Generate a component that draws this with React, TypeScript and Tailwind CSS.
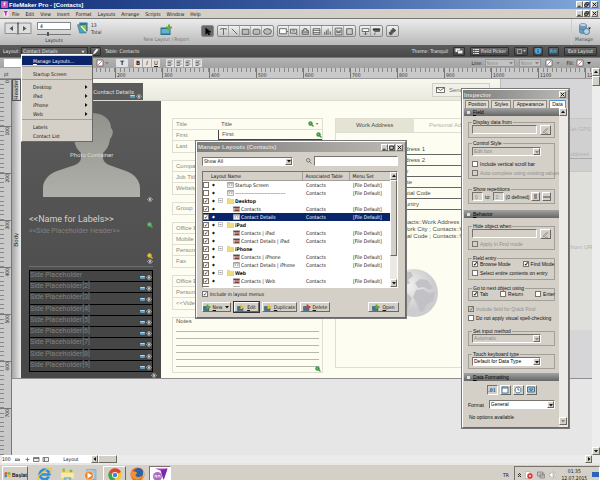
import type { ReactNode } from 'react'
import clsx from 'clsx'

const menus = ['File', 'Edit', 'View', 'Insert', 'Format', 'Layouts', 'Arrange', 'Scripts', 'Window', 'Help']
const rulerMarks = ['', '100', '200', '300', '400', '500', '600', '700', '800', '900', '1000', '1100', '1200']
const sideRows = ['', '[2]', '[3]', '[4]', '[5]', '[6]', '[7]', '[8]', '[9]']
const contactGroups = [
  ['Company', 'Job Title', 'Website'],
  ['Group'],
  ['Office Phone', 'Mobile Phone', 'Personal Phone', 'Fax'],
  ['Office Email', 'Personal Email', '<<Video>>'],
]
const addressRows = ['Address 1', 'Address 2', 'City', 'State', 'Postal Code', 'Country']

interface LayoutRow {
  name: string;
  kind: 'top' | 'folder' | 'list' | 'form';
  checked: boolean;
  selected?: boolean;
}

const layouts: LayoutRow[] = [
  { name: 'Startup Screen', kind: 'top', checked: false },
  { name: '-------------------------------', kind: 'top', checked: false },
  { name: 'Desktop', kind: 'folder', checked: true },
  { name: 'Contacts', kind: 'list', checked: true },
  { name: 'Contact Details', kind: 'form', checked: true, selected: true },
  { name: 'iPad', kind: 'folder', checked: true },
  { name: 'Contacts | iPad', kind: 'list', checked: true },
  { name: 'Contact Details | iPad', kind: 'list', checked: true },
  { name: 'iPhone', kind: 'folder', checked: true },
  { name: 'Contacts | iPhone', kind: 'list', checked: true },
  { name: 'Contact Details | iPhone', kind: 'form', checked: true },
  { name: 'Web', kind: 'folder', checked: true },
  { name: 'Contacts | Web', kind: 'list', checked: true },
  { name: 'Contact Details | Web', kind: 'list', checked: true },
]

const raised = 'border border-t-white border-l-white border-r-[#6b6964] border-b-[#6b6964] bg-[#d4d0c8]'
const sunken = 'border border-t-[#77746e] border-l-[#77746e] border-r-white border-b-white'
const titleText = "font-['Liberation_Sans',Arimo,sans-serif] text-[6px] leading-[8px] font-bold"

/* Small pieces */
function WinButtons({ flat }: { flat?: boolean }) {
  return (
    <div className="flex shrink-0">
      {['Minimize', 'Restore', 'Close'].map((name) => (
        <button key={name} aria-label={name} className={clsx(raised, 'flex h-[7px] w-[7px] items-center justify-center', name === 'Close' && 'ml-px')}>
          <svg viewBox="0 0 7 7" className="h-[5px] w-[5px]" fill="none" stroke="#111" strokeWidth="1.3">
            {name === 'Minimize' && <path d="M1 6h4" />}
            {name === 'Restore' && (flat ? <path d="M1 1.500h5v4.500h-5z" /> : <path d="M2.500 2.500V1H6v3.500H4.500M1 3h3.500v3H1z" />)}
            {name === 'Close' && <path d="M1 1l5 5M6 1L1 6" />}
          </svg>
        </button>
      ))}
    </div>
  )
}

function Arrow({ dir = 'down', dim }: { dir?: 'up' | 'down' | 'left' | 'right'; dim?: boolean }) {
  const d = { up: 'M1 4l2-2.500 2 2.500z', down: 'M1 2l2 2.500 2-2.500z', left: 'M4 1L1.500 3 4 5z', right: 'M2 1l2.500 2L2 5z' }[dir]
  return (
    <svg viewBox="0 0 6 6" className="h-[6px] w-[6px] shrink-0" fill={dim ? '#85827c' : '#111'}>
      <path d={d} />
    </svg>
  )
}

function Pick({ label, value, disabled, className }: { label: string; value: string; disabled?: boolean; className?: string }) {
  return (
    <div className={clsx(sunken, 'flex h-[9px] items-center', disabled ? 'bg-[#d4d0c8] text-[#8d8a84]' : 'bg-white text-black', className)}>
      <select aria-label={label} disabled={disabled} className="h-[7px] min-w-0 flex-1 appearance-none bg-transparent pl-px leading-[7px]">
        <option>{value}</option>
      </select>
      <span className={clsx(raised, 'flex h-[7px] w-[7px] items-center justify-center')}>
        <Arrow dim={disabled} />
      </span>
    </div>
  )
}

function Check({ label, on, disabled }: { label: string; on?: boolean; disabled?: boolean }) {
  return (
    <label className={clsx('flex items-center gap-[2px] whitespace-nowrap', disabled && 'text-[#918e88]')}>
      <Box on={on} disabled={disabled} />
      {label}
    </label>
  )
}

function Box({ on, disabled, label }: { on?: boolean; disabled?: boolean; label?: string }) {
  return (
    <input
      type="checkbox"
      aria-label={label}
      defaultChecked={on}
      disabled={disabled}
      className="grid h-[6px] w-[6px] shrink-0 appearance-none place-items-center border border-[#77746e] bg-white text-[6px] leading-[4px] font-bold text-black checked:after:content-['✓'] disabled:bg-[#d4d0c8] disabled:text-[#85827c]"
    />
  )
}

function Eye() {
  return (
    <svg viewBox="0 0 12 10" className="h-[5px] w-[6px] shrink-0" fill="none" stroke="#d8d8d4" strokeWidth="1.3">
      <path d="M1 5c3-5 7-5 10 0-3 5-7 5-10 0z" fill="#333" />
      <circle cx="6" cy="5" r="1.800" fill="#ddd" />
    </svg>
  )
}

function Tag() {
  return <span className="h-[3px] w-[5px] shrink-0 rounded-[1px] border-t border-[#b8dcef] bg-[#5b9cc4]" />
}

function Lens({ color = '#3f9a45' }: { color?: string }) {
  return (
    <svg viewBox="0 0 12 12" className="h-[6px] w-[6px] shrink-0">
      <path d="M7 7l4 4" stroke={color} strokeWidth="2.500" />
      <circle cx="5" cy="5" r="4.500" fill={color} />
      <circle cx="4.500" cy="4.500" r="1.500" fill="#fff" opacity=".35" />
    </svg>
  )
}

function Pen() {
  return (
    <button aria-label="Specify" className={clsx(raised, 'flex h-[10px] w-[11px] shrink-0 items-center justify-center')}>
      <svg viewBox="0 0 12 12" className="h-[7px] w-[7px]" fill="none" stroke="#8d8a84" strokeWidth="1.300">
        <path d="M2 10l1-3 6-5 1 1-5 6zM5 11h5" />
      </svg>
    </button>
  )
}

function Group({ title, children }: { title: string; children: ReactNode }) {
  return (
    <fieldset className="min-w-0 border border-[#a29f98] px-[3px] pb-[2px]">
      <legend className="px-px leading-[6px]">{title}</legend>
      {children}
    </fieldset>
  )
}

function Section({ title }: { title: string }) {
  return (
    <h3 className="flex h-[8px] items-center gap-[3px] bg-linear-to-b from-[#a3a3a3] to-[#666] pl-[3px] font-normal text-black">
      <span className="h-[3px] w-[3px] bg-[#ddd]" />
      <span><span className="underline">{title[0]}</span>{title.slice(1)}</span>
    </h3>
  )
}

function ToolGroup({ children }: { children: ReactNode }) {
  return <div className="flex h-[12px] divide-x divide-[#a8a8a8] overflow-hidden rounded-[2px] border border-[#8a8a8a] bg-linear-to-b from-[#f2f2f2] to-[#c4c4c4]">{children}</div>
}

function Tool({ name, path, active, fill }: { name: string; path: string; active?: boolean; fill?: string }) {
  return (
    <button aria-label={name} className={clsx('flex w-[11px] items-center justify-center', active && 'bg-[#6a6a6a]')}>
      <svg viewBox="0 0 16 16" className="h-[9px] w-[9px]" fill={fill || 'none'} stroke={active ? '#111' : '#4a4a4a'} strokeWidth="1.400">
        <path d={path} />
      </svg>
    </button>
  )
}

function DarkButton({ label, children, className }: { label: string; children: ReactNode; className?: string }) {
  return (
    <button aria-label={label} className={clsx('flex h-[9px] shrink-0 items-center justify-center gap-[2px] rounded-[1px] border border-[#2f2f2f] bg-linear-to-b from-[#6a6a6a] to-[#424242]', className)}>
      {children}
    </button>
  )
}

function NoFill() {
  return (
    <svg viewBox="0 0 16 16" className="h-[8px] w-[8px] shrink-0">
      <path d="M2 2h12v12H2z" fill="#fff" stroke="#555" strokeWidth="1.500" />
      <path d="M4 12L12 4" stroke="#c55" strokeWidth="1.500" />
    </svg>
  )
}

/* Top of the window */
function TopBars() {
  return (
    <header>
      <div className="flex h-[9px] items-center bg-linear-to-r from-[#12307a] via-[#3a5a9e] to-[#83aadb] pr-[2px] pl-px">
        <span className="mr-px h-[7px] w-[7px] rounded-[1px] bg-[#d64fc0] text-center text-[5px] leading-[7px] font-bold text-white">f</span>
        <h1 className={clsx(titleText, 'flex-1 text-white')}>FileMaker Pro - [Contacts]</h1>
        <WinButtons />
      </div>
      <div className="flex h-[9px] items-center bg-[#d4d0c8] pr-[2px] pl-[3px]">
        <svg viewBox="0 0 12 12" className="h-[7px] w-[6px]">
          <path d="M1 0h10v12H1z" fill="#fbe6f8" />
          <path d="M1 1h9L7 5v5H4V5z" fill="#c32fae" />
        </svg>
        <nav className="flex flex-1 gap-[6px] pl-[3px]">
          {menus.map((m) => (
            <a key={m} href="#">{m}</a>
          ))}
        </nav>
        <WinButtons />
      </div>
      <Toolbar />
      <LayoutBar />
      <FormatBar />
    </header>
  )
}

function Toolbar() {
  return (
    <div className="flex h-[27px] justify-between border-t border-[#777] bg-linear-to-b from-[#ececec] to-[#b9b9b9] px-[4px] text-[#333]">
      <div className="flex gap-[5px] pt-[3px]">
        <svg viewBox="0 0 54 26" className="h-[13px] w-[28px]" fill="#dedede" stroke="#777" strokeWidth="1.500">
          <path d="M1 2h22l4 2 4-2h22v21H31l-4 2-4-2H1z" />
          <path d="M17 8v10l-7-5zM37 8v10l7-5z" fill="#555" stroke="none" />
          <path d="M27 1v24" stroke="#333" strokeWidth="4" strokeDasharray="2 2" />
        </svg>
        <div className="flex w-[34px] flex-col">
          <input aria-label="Layout number" defaultValue="4" className="h-[8px] w-full border border-[#888] bg-white pl-[2px] text-black" />
          <input type="range" aria-label="Layout slider" defaultValue={30} className="mt-[2px] h-[4px] w-full appearance-none bg-[linear-gradient(#777,#777)] bg-[length:100%_1px] bg-center bg-no-repeat [&::-webkit-slider-thumb]:h-[4px] [&::-webkit-slider-thumb]:w-[2px] [&::-webkit-slider-thumb]:appearance-none [&::-webkit-slider-thumb]:bg-[#555]" />
          <span className="mt-px text-center">Layouts</span>
        </div>
        <svg viewBox="0 0 24 26" className="ml-px h-[12px] w-[11px]">
          <path d="M5 1h18v19H5z" fill="#2c7896" />
          <path d="M1 6h15l4 18H6z" fill="#49a4c4" stroke="#215d77" />
          <path d="M6 8l14 15V6z" fill="#8fbf45" />
          <path d="M9 9l10 11" stroke="#e9f2c5" strokeWidth="3" />
        </svg>
        <p className="-ml-[2px] leading-[7px]">13<br />Total</p>
        <button className="ml-[37px] flex flex-col items-center pt-[2px] text-[#777]">
          <svg viewBox="0 0 24 24" className="h-[12px] w-[12px]">
            <path d="M1 7h20v15H1z" fill="#2a718f" />
            <path d="M3 10h16v9H3z" fill="#63b2cd" />
            <path d="M16 1h4v4h4v4h-4v4h-4V9h-4V5h4z" fill="#67ad3a" />
          </svg>
          New Layout / Report
        </button>
      </div>
      <div className="flex flex-1 gap-[3px] pt-[6px] pl-[12px]">
        <ToolGroup><Tool name="Pointer" active fill="#000" path="M5 2v11l3-3 2 4 2-1-2-4h4z" /></ToolGroup>
        <ToolGroup>
          <Tool name="Text" path="M3 3h10M8 3v11M3 3v2M13 3v2" />
          <Tool name="Line" path="M3 3l10 10" />
          <Tool name="Rectangle" path="M2 4h12v9H2z" fill="#bbb" />
          <Tool name="Rounded rectangle" path="M4 4h8q2 0 2 2v5q0 2-2 2H4q-2 0-2-2V6q0-2 2-2z" fill="#bbb" />
          <Tool name="Oval" path="M1 8a7 5 0 1 0 14 0a7 5 0 1 0-14 0z" fill="#bbb" />
        </ToolGroup>
        <ToolGroup>
          <Tool name="Field" path="M1 3h12v9H1zM14 8h2" fill="#fff" />
          <Tool name="Button" path="M1 4h11v7H1zM4 7h5M10 12l3 2" fill="#ddd" />
          <Tool name="Tab" path="M2 13V6h3V3h5v3h3v7zM2 9h11" fill="#ccc" />
          <Tool name="Portal" path="M2 3h12v10H2zM2 6h12M2 10h12" fill="#eee" />
          <Tool name="Chart" path="M3 14V9M6 14V6M9 14V3M13 14V8" />
          <Tool name="Web viewer" path="M2 2h12v12H2zM5 6v4h6V6l-3 3z" fill="#ddd" />
          <Tool name="More" path="M3 3h10v10H3z" fill="#ccc" />
        </ToolGroup>
        <ToolGroup>
          <Tool name="Insert field" path="M2 3h12v5H2zM8 8v6M5 11l3 3 3-3" fill="#fff" />
          <Tool name="Insert part" path="M2 3h12v3H2zM4 8h10M6 10l-2 4" fill="#333" />
        </ToolGroup>
        <ToolGroup><Tool name="Format painter" path="M9 2l5 4-5 4-4-3zM2 10l4-2 2 4-4 2z" fill="#555" /></ToolGroup>
      </div>
      <button className="flex w-[25px] flex-col items-center border-l border-[#ccc] pt-[4px] text-[#555]">
        <svg viewBox="0 0 28 26" className="h-[13px] w-[14px]">
          <path d="M5 4v14c0 4 14 4 14 0V4z" fill="#6b9cc0" stroke="#40627d" />
          <ellipse cx="12" cy="4" rx="7" ry="3" fill="#c2dced" stroke="#40627d" />
          <path d="M5 10c0 4 14 4 14 0" fill="none" stroke="#40627d" />
          <circle cx="19" cy="17" r="6" fill="#b9d2e3" stroke="#507894" strokeWidth="2" />
          <path d="M22 9h6l-3 4z" fill="#222" />
        </svg>
        Manage
      </button>
    </div>
  )
}

function LayoutBar() {
  return (
    <div className="flex h-[12px] items-center justify-between bg-linear-to-b from-[#5c5c5c] to-[#484848] px-[3px] text-[#e6e6e6]">
      <div className="flex items-center">
        <label htmlFor="layout" className="w-[18px]">Layout:</label>
        <div className="flex h-[9px] w-[67px] items-center border border-[#2e2e2e] bg-[#606060] pr-px">
          <select id="layout" className="h-[7px] min-w-0 flex-1 appearance-none bg-transparent pl-px leading-[7px]">
            <option>Contact Details</option>
          </select>
          <svg viewBox="0 0 6 6" className="h-[5px] w-[6px]" fill="#ddd"><path d="M1 2h4L3 5z" /></svg>
        </div>
        <DarkButton label="Edit layout" className="ml-[2px] w-[11px]">
          <svg viewBox="0 0 12 12" className="h-[7px] w-[7px]" fill="#eee"><path d="M2 11l1-4 5-6 3 2-5 6z" /></svg>
        </DarkButton>
        <span className="ml-[4px]">Table: Contacts</span>
      </div>
      <div className="flex items-center gap-[5px]">
        <span>Theme: Tranquil</span>
        <DarkButton label="Change theme" className="w-[12px]">
          <svg viewBox="0 0 16 12" className="h-[6px] w-[8px]" fill="#eee"><path d="M1 1h9v3H5v4H1zM6 5h9v6H6z" /></svg>
        </DarkButton>
        <DarkButton label="Field Picker" className="w-[39px]">
          <svg viewBox="0 0 12 10" className="h-[5px] w-[6px]" stroke="#ddd" strokeWidth="2"><path d="M0 1h3M4 1h8M0 5h3M4 5h8M0 9h3M4 9h8" /></svg>
          Field Picker
        </DarkButton>
        <DarkButton label="Screen stencil" className="w-[14px]">
          <span className="h-[5px] w-[5px] border border-[#999]" />
          <span className="text-[4px] leading-[4px]">▾</span>
        </DarkButton>
        <DarkButton label="Inspector" className="w-[10px]">
          <span className="flex h-[6px] w-[6px] items-center justify-center rounded-full bg-[#4aaee6] text-[5px] leading-[5px] font-bold text-[#123]">i</span>
        </DarkButton>
        <DarkButton label="Formatting" className="w-[11px] font-bold text-[#4aaee6]">A≡</DarkButton>
        <DarkButton label="Exit Layout" className="w-[33px]">Exit Layout</DarkButton>
      </div>
    </div>
  )
}

function FormatBar() {
  return (
    <div className="flex h-[11px] items-center justify-between border-t border-[#777] bg-linear-to-b from-[#b4b4b4] to-[#a2a2a2] px-[4px] text-[#222]">
      <div className="flex items-center gap-[6px]">
        <input aria-label="Font" className="h-[8px] w-[86px] bg-white" />
        <div className="flex h-[8px] w-[14px] items-center"><NoFill /><Arrow dim /></div>
        <button className="h-[8px] w-[12px] rounded-[1px] bg-[#e2e2e2] text-[6px] leading-[8px] font-bold">T</button>
        <div className="flex h-[8px] divide-x divide-[#aaa] rounded-[1px] bg-[#e2e2e2] text-[6px] leading-[8px]">
          <button className="w-[9px] font-bold">B</button>
          <button className="w-[9px] italic">I</button>
          <button className="w-[8px] underline">U</button>
        </div>
        <div className="flex h-[8px] divide-x divide-[#aaa] rounded-[1px] bg-[#e2e2e2]">
          {['Left', 'Center', 'Right', 'Justify'].map((a) => (
            <button key={a} aria-label={a} className="flex w-[9px] items-center justify-center">
              <svg viewBox="0 0 12 12" className="h-[6px] w-[6px]" stroke="#555" strokeWidth="1.500"><path d="M1 2h10M1 5h7M1 8h10M1 11h7" /></svg>
            </button>
          ))}
        </div>
      </div>
      <div className="flex items-center gap-[2px] pr-[4px]">
        <span>Line:</span>
        {['Line style', 'Line width'].map((n, i) => (
          <div key={n} className={clsx('mr-[2px] flex h-[8px] items-center border border-[#999] bg-[#c2c2c2] text-[#888]', i ? 'w-[22px]' : 'w-[30px]')}>
            <select aria-label={n} className="h-[6px] min-w-0 flex-1 appearance-none pl-px leading-[6px]"><option>None</option></select>
            <Arrow dim />
          </div>
        ))}
        <NoFill />
        <Arrow dim />
        <span className="ml-[4px]">Fill:</span>
        <NoFill />
        <Arrow />
      </div>
    </div>
  )
}

/* Layout canvas */
function HRuler() {
  return (
    <div className="flex h-[11px] overflow-hidden border-b border-[#999] bg-[#c9c9c9] text-[#333]">
      <span className="w-[21px] shrink-0 pt-[3px] pl-[4px]">pt</span>
      {rulerMarks.map((m) => (
        <div key={m} className="h-full w-[47px] shrink-0 border-l border-[#777]">
          <div className="flex h-[4px]">
            {[1, 2, 3, 4, 5, 6, 7, 8, 9, 10].map((t) => (
              <span key={t} className="flex-1 border-r border-[#888]" />
            ))}
          </div>
          <span className="block pl-px">{m}</span>
        </div>
      ))}
    </div>
  )
}

function VRuler() {
  return (
    <div className="flex w-[12px] shrink-0 flex-col overflow-hidden border-r border-[#777] bg-[#c9c9c9] text-[#333]">
      {['0', ...rulerMarks.slice(1, 8)].map((m) => (
        <div key={m} className="flex h-[47px] w-full shrink-0 border-t border-[#777]">
          <div className="flex w-[4px] flex-col">
            {[1, 2, 3, 4, 5, 6, 7, 8, 9, 10].map((t) => (
              <span key={t} className="flex-1 border-b border-[#888]" />
            ))}
          </div>
          <span className="rotate-180 self-start [writing-mode:vertical-rl]">{m}</span>
        </div>
      ))}
    </div>
  )
}

function SidePanel() {
  return (
    <div className="flex w-[140px] shrink-0 flex-col bg-linear-to-b from-[#5b5b5b] to-[#474747] px-[8px] font-[Roboto,sans-serif] text-[#84817b]">
      <div className="relative ml-[14px] h-[96px] w-[97px] shrink-0">
        <svg viewBox="0 0 97 96" className="h-full w-full">
          <defs>
            <linearGradient id="skin" x2="0" y2="1"><stop stopColor="#92928c" /><stop offset="1" stopColor="#b0b0aa" /></linearGradient>
          </defs>
          <path fill="url(#skin)" d="M0 96V87c0-8 6-14 14-17l18-6c4-2 6-4 6-8V52c-5-5-6-8-7-14-3-3-4-9-1-11 0-9 6-15 18-15s20 6 20 15c3 2 2 8-1 11-1 6-2 9-7 14v4c0 4 2 6 6 8l17 6c8 3 14 9 14 17v9z" />
        </svg>
        <span className="absolute top-[50px] left-[27px] text-[6px] leading-[8px] whitespace-nowrap text-[#d9d9d4]">Photo Container</span>
      </div>
      <div className="flex h-[7px] justify-end"><Eye /></div>
      <p className="mt-[10px] text-[9px] leading-[10px] text-[#d2d2cc]">&lt;&lt;Name for Labels&gt;&gt;</p>
      <div className="-mt-[2px] flex justify-end"><Lens color="#58b158" /></div>
      <p className="-mt-px text-[7px] leading-[8px]">&lt;&lt;Side Placeholder Header&gt;&gt;</p>
      <div className="mt-[18px] flex flex-col items-end"><Lens color="#e0b422" /><Eye /></div>
      <div className="mt-[2px] border-t border-[#6e6e6e]" />
      <ul className="mt-[3px] flex h-[102px] flex-col divide-y divide-black border border-black bg-[#454545] text-[7px] leading-[8px]">
        {sideRows.map((s) => (
          <li key={s} className="flex flex-1 items-start justify-between">
            <span>Side Placeholder{s}</span>
            <span className="mt-[4px] flex items-center gap-px"><Tag /><Eye /></span>
          </li>
        ))}
      </ul>
      <div className="-mr-[4px] flex justify-end pt-px"><Eye /></div>
    </div>
  )
}

function ContactFields() {
  return (
    <div className="ml-[11px] flex w-[151px] shrink-0 flex-col gap-[7px] pt-[17px] text-[#8a8a84]">
      <div className="divide-y divide-[#deded2] border border-[#deded2]">
        {['Title', 'First', 'Last'].map((f) => (
          <div key={f} className="flex h-[11px] items-center pl-[3px]">
            <span className="w-[42px]">{f}</span>
            <div className={clsx('flex h-full flex-1 items-center justify-between pl-[3px] text-[#55554f]', f !== 'Title' && 'border-b border-l border-[#444]')}>
              <span>{f}</span>
              <span className="flex items-center gap-[2px]"><Lens />{f === 'Title' && <span className="w-[6px] text-[4px] leading-[4px]">▾</span>}</span>
            </div>
          </div>
        ))}
      </div>
      {contactGroups.map((g) => (
        <div key={g[0]} className="divide-y divide-[#deded2] border border-[#deded2]">
          {g.map((f) => <p key={f} className="h-[11px] pl-[3px] leading-[11px]">{f}</p>)}
        </div>
      ))}
      <div className="h-[56px] border border-[#deded2] px-[3px] text-[#55554f]">
        <p className="h-[7px] leading-[7px]">Notes</p>
        {[1, 2, 3, 4, 5, 6].map((n) => <div key={n} className="h-[7px] border-b border-[#b7b7ad]" />)}
        <div className="-mt-px -mr-[2px] flex justify-end"><Lens /></div>
      </div>
    </div>
  )
}

function AddressPanel() {
  return (
    <div className="ml-[12px] flex min-w-0 flex-1 flex-col overflow-hidden pt-[17px] pb-[10px] text-[#4f4f4a]">
      <div className="flex h-[15px] shrink-0 items-center border border-r-0 border-[#deded2] whitespace-nowrap">
        <div className="flex h-full w-[78px] items-center bg-[#e5e3d3] pl-[20px]">
          <button className="flex-1 text-left">Work Address</button>
          <span className="mt-[6px]"><Tag /></span>
        </div>
        <button className="ml-[15px] text-[#b5b5af]">Personal Address</button>
      </div>
      <div className="flex-1 border-b border-l border-[#deded2] pt-[11px]">
        <div className="pl-[42px]">
          {addressRows.map((a) => (
            <p key={a} className="h-[11px] border-b border-[#666] pl-[20px] leading-[11px]">{a}</p>
          ))}
        </div>
        <p className="pt-[9px] pl-[59px] leading-[7px] whitespace-nowrap">
          Contacts::Work Address 1<br />
          &nbsp;&nbsp;;&nbsp;Work City ; Contacts::Work<br />
          Postal Code ; Contacts::WAdd
        </p>
        <svg viewBox="0 0 48 48" className="mt-[29px] ml-[54px] h-[48px] w-[48px]">
          <defs>
            <radialGradient id="globe" cx=".4" cy=".35"><stop stopColor="#efefef" /><stop offset="1" stopColor="#cdcdcf" /></radialGradient>
          </defs>
          <circle cx="24" cy="24" r="24" fill="url(#globe)" />
          <path fill="#c2c2c6" d="M6 10c5-5 10-7 15-7l2 4-5 4 2 3-6 3-2 5-6-3-3-4zM9 25l8-1 5 5-3 6-2 8c-5-3-7-9-8-18zM25 14l5-4 7 1 6 8-4 2-5-3-6 1zM26 21l7-1 6 4 6-1-2 9-7 4-2 6-4 1-3-8-4-7z" />
        </svg>
      </div>
    </div>
  )
}

function Canvas() {
  return (
    <div className="flex flex-1 overflow-hidden bg-[#e6e6e6]">
      <VRuler />
      <div className="flex h-[300px] min-w-0 flex-1 border-b border-[#8f8f8f] font-['Liberation_Sans',Arimo,sans-serif] text-[6px] leading-[7px]">
        <div className="flex w-[9px] shrink-0 flex-col bg-linear-to-r from-[#a5a5a5] to-[#ececec] text-[#222]">
          <div className="flex h-[22px] items-center justify-center border border-[#555]">
            <span className="rotate-180 [writing-mode:vertical-rl]">Header</span>
          </div>
          <div className="flex flex-1 items-center justify-center">
            <span className="rotate-180 [writing-mode:vertical-rl]">Body</span>
          </div>
        </div>
        <div className="flex w-[479px] shrink-0 flex-col bg-[#fdfdf1]">
          <div className="flex h-[22px] justify-between border-b border-[#dcdcd2] bg-linear-to-b from-[#f8f8ee] to-[#e9e9e0]">
            <div className="mt-[4px] flex w-[122px] flex-col items-end bg-[#5b5b5b] pt-[5px] pr-px font-[Roboto,sans-serif] text-[#dcdcd8]">
              <span className="pr-[8px]">Contact Details</span>
              <span className="-mt-px flex items-center gap-px"><Tag /><Eye /></span>
            </div>
            <button className="mt-[4px] mr-[10px] flex h-[14px] w-[58px] items-center gap-[4px] border border-[#d0d0c4] bg-[#f0f0e6] pl-[3px] text-[#77776f]">
              <svg viewBox="0 0 18 12" className="h-[6px] w-[9px]" fill="#fff" stroke="#444" strokeWidth="1.500"><path d="M1 1h16v10H1zl8 6 8-6" /></svg>
              Send Email
            </button>
          </div>
          <div className="flex flex-1">
            <SidePanel />
            <ContactFields />
            <AddressPanel />
          </div>
        </div>
        <div className="flex min-w-0 flex-1 flex-col overflow-hidden border-l border-[#bbb] bg-[#d6d6d8] whitespace-nowrap text-[#b2b2b2]">
          <div className="h-[39px]" />
          <div className="h-[54px] border-y border-[#c6c6c6] bg-[#d0d0d0] pt-[7px] pl-[66px]">
            Get GPS
            <p className="mt-[18px] border-b border-[#aaa]">Address</p>
          </div>
          <div className="h-[158px] bg-[#dfe0dc] pt-[72px] pl-[56px]">Map from URL</div>
        </div>
      </div>
    </div>
  )
}

function LayoutMenu() {
  const item = 'flex h-[9px] w-full items-center justify-between pr-[3px] pl-[11px]'
  const rule = 'mt-px mb-[2px] border-[#a29f98]'
  return (
    <div className={clsx(raised, 'absolute top-[54px] left-[21px] w-[72px] py-px')}>
      <button className={clsx(item, 'bg-[#0a246a] text-white')}><span><span className="underline">M</span>anage Layouts...</span></button>
      <hr className={rule} />
      <button className={item}>Startup Screen</button>
      <hr className={rule} />
      {['Desktop', 'iPad', 'iPhone', 'Web'].map((m) => (
        <button key={m} className={item}>{m}<Arrow dir="right" /></button>
      ))}
      <hr className={rule} />
      <button className={item}>Labels</button>
      <button className={item}>Contact List</button>
    </div>
  )
}

/* Manage Layouts dialog */
function RowIcon({ kind, selected }: { kind: LayoutRow['kind']; selected?: boolean }) {
  if (kind === 'folder') {
    return <svg viewBox="0 0 14 12" className="h-[6px] w-[7px] shrink-0"><path d="M0 1h6l1 2h7v9H0z" fill="#f0dc78" stroke="#d8c26a" /></svg>
  }
  return (
    <svg viewBox="0 0 14 12" className="h-[6px] w-[7px] shrink-0">
      <path d="M1 1h12v10H1z" fill={kind === 'list' ? '#e9cfc9' : '#f4f4f4'} stroke={selected ? '#ccc' : '#777'} />
      <path d={kind === 'list' ? 'M1 3h12M3 6h9M3 9h9' : 'M1 2h12M3 6h3M8 6h3'} stroke={kind === 'list' ? '#7a3d33' : '#888'} strokeWidth="2" />
    </svg>
  )
}

function DialogButton({ label, color, arrow, strong, className }: { label: string; color: string; arrow?: boolean; strong?: boolean; className?: string }) {
  return (
    <button className={clsx(raised, 'flex h-[10px] items-center justify-center gap-[2px]', strong && 'outline outline-[#333]', className)}>
      <svg viewBox="0 0 16 14" className="h-[7px] w-[8px] shrink-0">
        <path d="M1 5h11v8H1z" fill="#3b7691" stroke="#24495c" />
        <path d="M7 1h4v3h4v4h-4v2H7z" fill={color} />
      </svg>
      <span><span className="underline">{label[0]}</span>{label.slice(1)}</span>
      {arrow && <Arrow />}
    </button>
  )
}

function ManageDialog() {
  return (
    <section className={clsx(raised, 'absolute top-[141px] left-[196px] flex w-[210px] flex-col shadow-[0_0_0_1px_#777]')}>
      <div className="flex h-[10px] items-center bg-linear-to-r from-[#7d7d7d] to-[#bcbab5] pr-[2px] pl-px">
        <h2 className={clsx(titleText, 'flex-1 text-[#dedad2]')}>Manage Layouts (Contacts)</h2>
        <WinButtons flat />
      </div>
      <div className="mt-[4px] flex items-center pr-[7px] pl-[5px]">
        <Pick label="Show" value="Show All" className="w-[91px]" />
        <svg viewBox="0 0 12 12" className="mr-[2px] ml-[13px] h-[6px] w-[6px]" fill="none" stroke="#666" strokeWidth="1.600"><circle cx="4.500" cy="4.500" r="3.500" /><path d="M7 7l4 4" /></svg>
        <input aria-label="Search" className={clsx(sunken, 'h-[10px] min-w-0 flex-1 bg-white')} />
      </div>
      <div className={clsx(sunken, 'mt-[5px] mr-[7px] ml-[5px] flex h-[117px] bg-white')}>
        <div className="min-w-0 flex-1 overflow-hidden">
          <table className="w-full table-fixed border-collapse text-left">
            <thead>
              <tr className="h-[8px] border-b border-[#a29f98] bg-[#d4d0c8]">
                <th className="w-[99px] py-0 pl-[8px] font-normal">Layout Name</th>
                <th className="w-[47px] border-l border-[#a29f98] p-0 pl-[3px] font-normal whitespace-nowrap">Associated Table</th>
                <th className="border-l border-[#a29f98] p-0 pl-[3px] font-normal">Menu Set</th>
              </tr>
            </thead>
            <tbody>
              {layouts.map((row) => (
                <tr key={row.name} className={clsx('h-[8px]', row.selected && 'bg-[#0a246a] text-white')}>
                  <td className="p-0">
                    <div className="flex h-[8px] items-center overflow-hidden whitespace-nowrap">
                      <Box on={row.checked} label={`Show ${row.name}`} />
                      <span className="w-[9px] text-center text-[4px]">◆</span>
                      <span className={clsx('flex items-center', row.kind === 'list' || row.kind === 'form' ? 'w-[15px]' : 'w-[9px]')}>
                        {row.kind === 'folder' && (
                          <svg viewBox="0 0 10 10" className="h-[5px] w-[5px]" fill="#fff" stroke="#888"><path d="M1 1h8v8H1z" /><path d="M3 5h4" stroke="#222" /></svg>
                        )}
                      </span>
                      <RowIcon kind={row.kind} selected={row.selected} />
                      <span className={clsx('ml-px', row.kind === 'folder' && 'font-bold')}>{row.name}</span>
                    </div>
                  </td>
                  <td className="p-0 pl-[4px]">{row.kind !== 'folder' && 'Contacts'}</td>
                  <td className="p-0 pl-[4px] whitespace-nowrap">{row.kind !== 'folder' && '[File Default]'}</td>
                </tr>
              ))}
            </tbody>
          </table>
        </div>
        <div className="flex w-[7px] flex-col bg-[#ebe9e5]">
          <button aria-label="Scroll up" className={clsx(raised, 'flex h-[8px] items-center justify-center')}><Arrow dir="up" /></button>
          <div className={clsx(raised, 'h-[76px]')} />
          <button aria-label="Scroll down" className={clsx(raised, 'mt-auto flex h-[8px] items-center justify-center')}><Arrow /></button>
        </div>
      </div>
      <div className="mt-[3px] pl-[5px]"><Check label="Include in layout menus" on /></div>
      <div className="mt-[5px] mb-[5px] flex gap-[3px] pr-[6px] pl-[5px]">
        <DialogButton label="New" color="#5fa53e" arrow className="w-[29px]" />
        <DialogButton label="Edit" color="#e6c34a" strong className="w-[25px]" />
        <DialogButton label="Duplicate" color="#e0c23c" className="w-[35px]" />
        <DialogButton label="Delete" color="#cc3d3d" className="w-[30px]" />
        <DialogButton label="Open" color="#5fa53e" className="ml-auto w-[31px]" />
      </div>
    </section>
  )
}

/* Inspector palette */
function Inspector() {
  return (
    <aside className={clsx(raised, "absolute top-[89px] left-[462px] w-[107px] font-['Liberation_Sans',Arimo,sans-serif] shadow-[0_0_0_1px_#777]")}>
      <div className="flex h-[9px] items-center justify-between bg-linear-to-r from-[#7d7d7d] to-[#bcbab5] pr-[2px] pl-px">
        <h2 className={clsx(titleText, 'text-[#dedad2]')}>Inspector</h2>
        <button aria-label="Close inspector" className={clsx(raised, 'flex h-[7px] w-[7px] items-center justify-center')}>
          <svg viewBox="0 0 7 7" className="h-[5px] w-[5px]" stroke="#111" strokeWidth="1.300"><path d="M1 1l5 5M6 1L1 6" /></svg>
        </button>
      </div>
      <div className="flex gap-[2px] px-[2px] pt-px">
        {['Position', 'Styles', 'Appearance', 'Data'].map((t) => (
          <button key={t} className={clsx('h-[8px] flex-auto rounded-t-[1px] border border-b-0 border-[#8d8a84] leading-[7px]', t === 'Data' ? 'border-t-[#4d93cc] bg-white' : 'bg-[#dedbd4]')}>{t}</button>
        ))}
      </div>
      <div className="flex">
        <div className="flex min-w-0 flex-1 flex-col pb-[7px] pl-px">
          <Section title="Field" />
          <div className="flex flex-col gap-[2px] px-[4px] pt-[3px] pb-[6px]">
            <Group title="Display data from">
              <div className="flex gap-[3px]">
                <input aria-label="Display data from" className={clsx(sunken, 'h-[9px] min-w-0 flex-1')} />
                <Pen />
              </div>
            </Group>
            <Group title="Control Style">
              <div className="flex flex-col gap-[3px] pt-px">
                <Pick label="Control style" value="Edit box" disabled className="mb-[2px] w-[69px]" />
                <Check label="Include vertical scroll bar" />
                <Check label="Auto-complete using existing values" disabled />
              </div>
            </Group>
            <div className="h-[3px]" />
            <Group title="Show repetitions">
              <div className="flex items-center gap-[2px] whitespace-nowrap">
                <input aria-label="From" disabled defaultValue="0" className={clsx(sunken, 'h-[9px] w-[11px] pl-[2px] text-[#8d8a84]')} />
                to:
                <input aria-label="To" disabled defaultValue="0" className={clsx(sunken, 'h-[9px] w-[11px] pl-[2px] text-[#8d8a84]')} />
                (0 defined)
                <button aria-label="Vertical" className={clsx(raised, 'ml-auto flex h-[9px] w-[11px] items-center justify-center')}><span className="h-[5px] w-[3px] bg-[#8d8a84]" /></button>
                <button aria-label="Horizontal" className={clsx(raised, 'flex h-[9px] w-[11px] items-center justify-center')}><span className="h-[2px] w-[7px] bg-[#8d8a84]" /></button>
              </div>
            </Group>
          </div>
          <Section title="Behavior" />
          <div className="flex flex-col gap-[5px] px-[4px] pt-[5px] pb-[4px]">
            <Group title="Hide object when">
              <div className="flex gap-[3px]">
                <input aria-label="Hide object when" className={clsx(sunken, 'h-[9px] min-w-0 flex-1')} />
                <Pen />
              </div>
              <div className="pt-[2px]"><Check label="Apply in Find mode" disabled /></div>
            </Group>
            <Group title="Field entry">
              <div className="flex flex-col gap-[3px] pb-px">
                <div className="flex gap-[12px]"><Check label="Browse Mode" on /><Check label="Find Mode" on /></div>
                <Check label="Select entire contents on entry" />
              </div>
            </Group>
            <Group title="Go to next object using">
              <div className="flex gap-[12px] pb-px"><Check label="Tab" on /><Check label="Return" /><Check label="Enter" /></div>
            </Group>
            <div className="flex flex-col gap-[3px] pb-[2px]">
              <Check label="Include field for Quick Find" on disabled />
              <Check label="Do not apply visual spell-checking" />
            </div>
            <Group title="Set input method"><Pick label="Set input method" value="Automatic" disabled className="w-[69px]" /></Group>
            <Group title="Touch keyboard type"><Pick label="Touch keyboard type" value="Default for Data Type" className="w-[69px]" /></Group>
          </div>
          <Section title="Data Formatting" />
          <div className="flex justify-center gap-[2px] pt-[4px]">
            <button className={clsx(sunken, "h-[10px] w-[11px] font-['Liberation_Serif',serif] text-[6px] leading-[8px] font-bold text-[#2d5c85]")}>.01</button>
            {['M2 2h12v12H2zM2 4h12', 'M8 2a6 6 0 1 0 .1 0zM8 4v4h3', 'M1 2h14v10H1zM4 6h8l-4 4z'].map((d, i) => (
              <button key={d} aria-label={['Date', 'Time', 'Graphic'][i]} className={clsx(raised, 'flex h-[10px] w-[11px] items-center justify-center')}>
                <svg viewBox="0 0 16 16" className="h-[8px] w-[8px]" fill={i === 2 ? '#a8c3d6' : '#fff'} stroke="#396b92" strokeWidth="1.800"><path d={d} /></svg>
              </button>
            ))}
          </div>
          <div className="flex items-center gap-[5px] px-[4px] pt-[5px]">
            <span>Format</span>
            <Pick label="Format" value="General" className="flex-1" />
          </div>
          <p className="pt-[5px] pl-[5px]">No options available</p>
        </div>
        <div className="flex w-[9px] flex-col justify-between bg-[#eceae6] pr-px pb-[2px]">
          <button aria-label="Scroll inspector up" className={clsx(raised, 'flex h-[8px] items-center justify-center')}><Arrow dir="up" /></button>
          <button aria-label="Scroll inspector down" className={clsx(raised, 'flex h-[8px] items-center justify-center')}><Arrow dim /></button>
        </div>
      </div>
    </aside>
  )
}

/* Bottom of the screen */
function StatusBar() {
  return (
    <div className="flex h-[8px] bg-[#ebebeb] pl-[2px]">
      <div className="flex w-[89px] items-center bg-white">
        <span className="w-[13px]">100</span>
        <svg viewBox="0 0 72 14" className="h-[7px] w-[36px]" fill="#eee" stroke="#555" strokeWidth="1.500"><path d="M0 6h9v3H0zM21 7h8M25 3v8M37 3h11v8H37zM37 5h11M56 3h11v8H56zM59 3v8" /></svg>
        <span className="flex-1 text-center">Layout</span>
      </div>
      <button aria-label="Scroll left" className={clsx(raised, 'flex w-[7px] items-center')}><Arrow dir="left" /></button>
      <div className={clsx(raised, 'w-[19px]')} />
      <button aria-label="Scroll right" className={clsx(raised, 'mr-[8px] ml-auto flex w-[7px] items-center')}><Arrow dir="right" /></button>
    </div>
  )
}

function Taskbar() {
  return (
    <footer className="flex h-[21px] items-center border-t-2 border-[#e9e7e3] bg-[#d4d0c8] pl-[2px]">
      <button className={clsx(raised, "flex h-[17px] w-[26px] items-center gap-px pl-px font-['Liberation_Sans',Arimo,sans-serif] font-bold")}>
        <svg viewBox="0 0 14 14" className="h-[7px] w-[7px] shrink-0">
          <path d="M1 3l5-1v5L1 8z" fill="#e2562b" /><path d="M7 2l6 1v5L7 7z" fill="#76b53c" />
          <path d="M1 8l5-1v5l-5 1z" fill="#3f86cf" /><path d="M7 7l6 1v5l-6-1z" fill="#f2c02e" />
        </svg>
        Başlat
      </button>
      <a href="#" aria-label="Internet Explorer" className="ml-[9px]">
        <svg viewBox="0 0 28 28" className="h-[15px] w-[15px]" fill="none">
          <path d="M22 18a9 9 0 1 1 1-4H8" stroke="#2f8fd8" strokeWidth="5" />
          <path d="M3 25C-2 18 17 1 26 3c3 2-1 7-3 9" stroke="#f0c03a" strokeWidth="2" />
        </svg>
      </a>
      <a href="#" aria-label="Explorer" className="ml-[8px]">
        <svg viewBox="0 0 28 28" className="h-[15px] w-[15px]">
          <path d="M2 4h10l2 3h12v19H2z" fill="#ecd47b" /><path d="M5 3h4v6H5zM18 5h5v5h-5z" fill="#7cba58" />
          <path d="M2 11h24v10H2z" fill="#f8e9a6" /><path d="M7 26v-7h14v7h-4v-4h-6v4z" fill="#78b5dd" />
        </svg>
      </a>
      <a href="#" aria-label="Media Player" className="ml-[8px]">
        <svg viewBox="0 0 28 28" className="h-[14px] w-[14px]">
          <path d="M7 3h19v20H7z" fill="#9cc8e2" stroke="#5c98bf" /><circle cx="12" cy="15" r="9" fill="#ec842b" stroke="#fff" /><path d="M9 9l9 6-9 6z" fill="#fff" />
        </svg>
      </a>
      <a href="#" aria-label="Chrome" className={clsx(raised, 'ml-[6px] flex h-[17px] w-[23px] items-center justify-center')}>
        <svg viewBox="0 0 28 28" className="h-[14px] w-[14px]">
          <circle cx="14" cy="14" r="13" fill="#f5c933" /><path d="M14 14L2 9a13 13 0 0 1 24-1z" fill="#dc4534" /><path d="M14 14l-1 13A13 13 0 0 1 2 8z" fill="#3da655" />
          <circle cx="14" cy="14" r="6" fill="#fff" /><circle cx="14" cy="14" r="4.500" fill="#4285d8" />
        </svg>
      </a>
      <a href="#" aria-label="Firefox" className="ml-[4px]">
        <svg viewBox="0 0 28 28" className="h-[15px] w-[15px]">
          <circle cx="14" cy="14" r="13" fill="#e4682a" /><circle cx="16" cy="11" r="9" fill="#2d63a6" /><path d="M2 7l5 2c3-2 6 0 6 3l-3 3c2 5 8 5 12 1 0 7-10 10-16 5S1 13 2 7z" fill="#f2922e" /><path d="M24 6c5 8 2 15-4 19 4-6 5-12 4-19z" fill="#f6bd35" />
        </svg>
      </a>
      <a href="#" aria-label="FileMaker Pro" className={clsx(sunken, 'ml-[4px] flex h-[17px] w-[22px] items-center justify-center bg-white')}>
        <svg viewBox="0 0 32 28" className="h-[14px] w-[16px]">
          <path d="M6 1h25L24 22V8z" fill="#c12fc6" /><path d="M17 5l14-4-8 23z" fill="#762ca6" />
          <circle cx="11" cy="17" r="9" fill="#ad6bc1" /><path d="M6 19v-4h3v4M12 19v-4h4v4" stroke="#fff" fill="none" strokeWidth="1.500" />
        </svg>
      </a>
      <span className="ml-auto w-[11px]">TR</span>
      <div className={clsx(sunken, 'flex h-[17px] w-[86px] items-center gap-[4px] pl-[3px]')}>
        <svg viewBox="0 0 6 10" className="h-[6px] w-[3px]" stroke="#222" fill="none" strokeWidth="2"><path d="M0 5l3-3 3 3M0 9l3-3 3 3" /></svg>
        <svg viewBox="0 0 16 16" className="h-[8px] w-[8px]"><path d="M1 1h9v14H1z" fill="#fff" stroke="#999" /><circle cx="10" cy="10" r="5.500" fill="#d33" /><path d="M8 8l4 4M12 8l-4 4" stroke="#fff" strokeWidth="1.500" /></svg>
        <svg viewBox="0 0 16 16" className="h-[8px] w-[8px]"><path d="M1 2h11v8H1zM6 6h9v8H6z" fill="#ccc" stroke="#777" strokeWidth="1.500" /></svg>
        <svg viewBox="0 0 16 16" className="h-[8px] w-[8px]" fill="#fff" stroke="#999"><path d="M1 5h3l4-4v14l-4-4H1zM10 4q3 4 0 8M12 2q5 6 0 12" /></svg>
        <time className="w-[28px] text-center leading-[7px]">01:35<br />12.07.2015</time>
        <span className="h-[5px] w-[7px] bg-[#2a63b8]" />
      </div>
    </footer>
  )
}

export default function App() {
  return (
    <main className="relative flex min-h-screen flex-col overflow-hidden bg-[#e6e6e6] font-['DejaVu_Sans_Condensed','Noto_Sans',sans-serif] text-[5px] leading-[6px] text-[#111]">
      <TopBars />
      <div className="flex flex-1">
        <div className="flex min-w-0 flex-1 flex-col">
          <HRuler />
          <Canvas />
        </div>
        <div className="flex w-[8px] shrink-0 flex-col bg-[#ededed]">
          <button aria-label="Scroll canvas up" className={clsx(raised, 'flex h-[8px] items-center justify-center')}><Arrow dir="up" /></button>
          <div className={clsx(raised, 'h-[10px]')} />
          <button aria-label="Scroll canvas down" className={clsx(raised, 'mt-auto flex h-[8px] items-center justify-center')}><Arrow /></button>
        </div>
      </div>
      <StatusBar />
      <Taskbar />
      <LayoutMenu />
      <ManageDialog />
      <Inspector />
    </main>
  )
}
